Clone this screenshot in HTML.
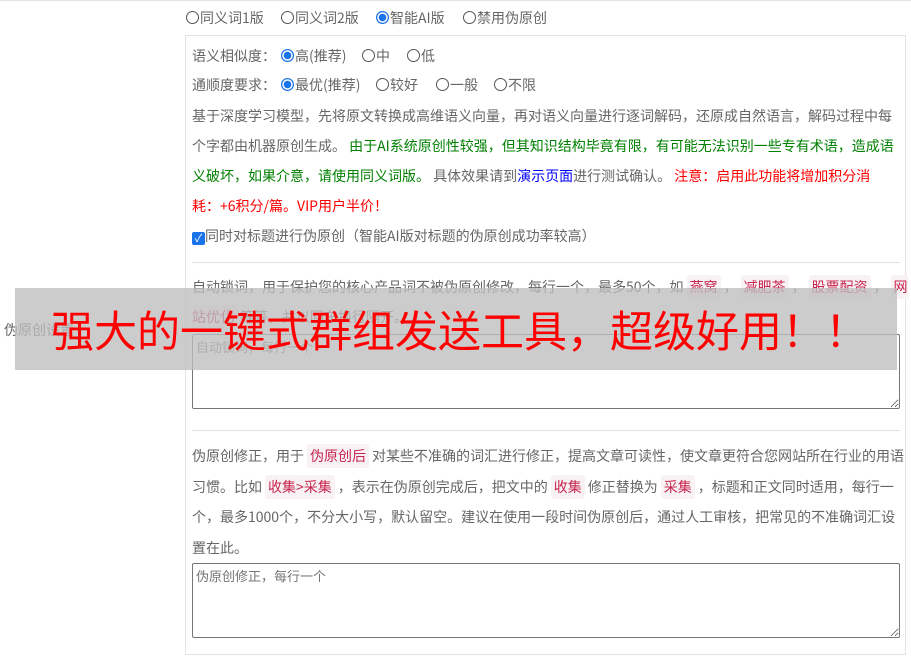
<!DOCTYPE html>
<html><head><meta charset="utf-8"><style>
*{margin:0;padding:0;box-sizing:border-box}
body{width:911px;height:658px;overflow:hidden;background:#fff;font-family:"Noto Sans CJK SC","Liberation Sans",sans-serif;font-size:14px;color:#666;position:relative}
.a{position:absolute;white-space:nowrap;line-height:20px}
.r{display:inline-block;width:13px;height:13px;border:1px solid #555;border-radius:50%;vertical-align:-1px;margin-right:1px;background:#fff}
.r.on{border:1px solid #1a73e8;background:radial-gradient(circle,#1a73e8 0 3.5px,#fff 4px 5px,#1a73e8 5.5px)}
code{font-family:inherit;color:#c7254e;background:#f9f2f4;border-radius:3px;padding:2px 3px;margin:0 3px}
.para{position:absolute;left:192px;width:720px;white-space:nowrap}
.hr{position:absolute;left:192px;width:708px;height:1px;background:#e3e3e3}
textarea{position:absolute;left:192px;width:708px;border:1px solid #767676;border-radius:2px;font-family:inherit;font-size:13px;color:#777;padding:2px 3px;resize:both}
</style></head><body>
<div style="position:absolute;left:0;top:0;width:911px;height:1px;background:#e3e3e3"></div>
<div class="a" style="left:186px;top:8px"><span class="r"></span>同义词1版</div>
<div class="a" style="left:281px;top:8px"><span class="r"></span>同义词2版</div>
<div class="a" style="left:376px;top:8px"><span class="r on"></span>智能AI版</div>
<div class="a" style="left:463px;top:8px"><span class="r"></span>禁用伪原创</div>
<div style="position:absolute;left:185px;top:35px;width:721px;height:620px;border:1px solid #e3e3e3"></div>
<div class="a" style="left:192px;top:46px">语义相似度：</div>
<div class="a" style="left:281px;top:46px"><span class="r on"></span>高(推荐)</div>
<div class="a" style="left:362px;top:46px"><span class="r"></span>中</div>
<div class="a" style="left:407px;top:46px"><span class="r"></span>低</div>
<div class="a" style="left:192px;top:75px">通顺度要求：</div>
<div class="a" style="left:281px;top:75px"><span class="r on"></span>最优(推荐)</div>
<div class="a" style="left:376px;top:75px"><span class="r"></span>较好</div>
<div class="a" style="left:436px;top:75px"><span class="r"></span>一般</div>
<div class="a" style="left:494px;top:75px"><span class="r"></span>不限</div>
<div class="para" style="top:101px;line-height:30px">基于深度学习模型，先将原文转换成高维语义向量，再对语义向量进行逐词解码，还原成自然语言，解码过程中每<br>个字都由机器原创生成。 <span style="color:#008000">由于AI系统原创性较强，但其知识结构毕竟有限，有可能无法识别一些专有术语，造成语<br>义破坏，如果介意，请使用同义词版。</span> 具体效果请到<span style="color:#00f">演示页面</span>进行测试确认。 <span style="color:#f00">注意：启用此功能将增加积分消<br>耗：+6积分/篇。VIP用户半价！</span></div>
<div class="a" style="left:192px;top:226px"><span style="display:inline-block;width:13px;height:13px;background:#1a73e8;border-radius:2px;color:#fff;font-size:11px;line-height:13px;text-align:center;vertical-align:-1px">✓</span>同时对标题进行伪原创（智能AI版对标题的伪原创成功率较高）</div>
<div class="hr" style="top:262px"></div>
<div class="para" style="top:272px;line-height:30px">自动锁词，用于保护您的核心产品词不被伪原创修改，每行一个，最多50个，如<code>燕窝</code>，<code>减肥茶</code>，<code>股票配资</code>，<code>网<br>站优化</code>等等，并以回车换行隔开。</div>
<div class="a" style="left:4px;top:320px">伪原创设置</div>
<textarea style="top:334px;height:75px" placeholder="自动锁词，每行一个"></textarea>
<div class="hr" style="top:430px"></div>
<div class="para" style="top:441px;line-height:30.7px">伪原创修正，用于<code>伪原创后</code>对某些不准确的词汇进行修正，提高文章可读性，使文章更符合您网站所在行业的用语<br>习惯。比如<code>收集&gt;采集</code>，表示在伪原创完成后，把文中的<code>收集</code>修正替换为<code>采集</code>，标题和正文同时适用，每行一<br>个，最多1000个，不分大小写，默认留空。建议在使用一段时间伪原创后，通过人工审核，把常见的不准确词汇设<br>置在此。</div>
<textarea style="top:563px;height:75px" placeholder="伪原创修正，每行一个"></textarea>
<div style="position:absolute;left:15px;top:288px;width:882px;height:82px;background:rgba(190,190,190,0.78);color:#f00;font-size:43px;line-height:82px;padding-left:36px;white-space:nowrap">强大的一键式群组发送工具，超级好用！！</div>
</body></html>
